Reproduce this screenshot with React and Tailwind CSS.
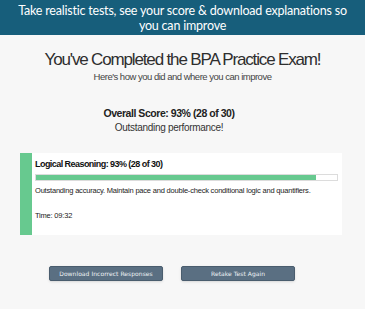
import React from "react";

const App = () => {
  return (
    <section className="w-[365px] h-[309px] bg-[#f7f7f7] overflow-hidden" style={{ fontFamily: '"Liberation Sans", Arial, sans-serif' }}>
      <header className="h-[35px] bg-[#175e7b] flex flex-col items-center justify-center text-white" style={{ fontFamily: 'Lato, "Open Sans", sans-serif' }}>
        <p className="text-[12.5px] leading-[15px] tracking-[-0.2px] text-center">
          Take realistic tests, see your score &amp; download explanations so
        </p>
        <p className="text-[12.5px] leading-[15px] tracking-[-0.2px] text-center">you can improve</p>
      </header>

      <div className="flex flex-col items-center text-[#333]">
        <h1 className="mt-[15px] text-[17px] leading-[20px] tracking-[-1.15px] text-[#2e2e2e]">
          You've Completed the BPA Practice Exam!
        </h1>
        <p className="mt-[1px] text-[9.5px] leading-[12px] tracking-[-0.5px] text-[#444]">
          Here's how you did and where you can improve
        </p>
        <div className="mr-[27px] flex flex-col items-center">
          <p className="mt-[24px] text-[10.5px] leading-[12px] font-bold tracking-[-0.45px] text-[#222]">
            Overall Score: 93% (28 of 30)
          </p>
          <p className="mt-[3px] text-[10px] leading-[12px] tracking-[-0.3px] text-[#333]">
            Outstanding performance!
          </p>
        </div>
      </div>

      <div className="mt-[19px] ml-[20px] w-[322px] h-[82px] flex bg-white">
        <div className="w-[12px] bg-[#67c98f]" />
        <div className="flex-1 pl-[3px] pr-[4px] pt-[6px]">
          <p className="text-[9px] leading-[11px] font-bold tracking-[-0.55px] text-[#111]">
            Logical Reasoning: 93% (28 of 30)
          </p>
          <div className="mt-[4px] h-[7px] border border-[#dcdcdc] bg-white">
            <div className="h-full bg-[#67c98f]" style={{ width: "93%" }} />
          </div>
          <p className="mt-[5px] text-[7.5px] leading-[10px] tracking-[-0.2px] text-[#222]">
            Outstanding accuracy. Maintain pace and double-check conditional logic and quantifiers.
          </p>
          <p className="mt-[15px] text-[7.5px] leading-[10px] tracking-[-0.2px] text-[#222]">Time: 09:32</p>
        </div>
      </div>

      <div className="mt-[31px] pl-[49px] flex gap-[18px]">
        <button className="w-[114px] h-[15px] rounded-[2px] bg-[#5a6f82] border border-[#4a5d6e] shadow-sm text-[6px] tracking-[0.05px] text-[#eef2f5]" style={{ fontFamily: '"DejaVu Sans", sans-serif' }}>
          Download Incorrect Responses
        </button>
        <button className="w-[114px] h-[15px] rounded-[2px] bg-[#5a6f82] border border-[#4a5d6e] shadow-sm text-[6px] tracking-[0.05px] text-[#eef2f5]" style={{ fontFamily: '"DejaVu Sans", sans-serif' }}>
          Retake Test Again
        </button>
      </div>
    </section>
  );
};

export default App;
